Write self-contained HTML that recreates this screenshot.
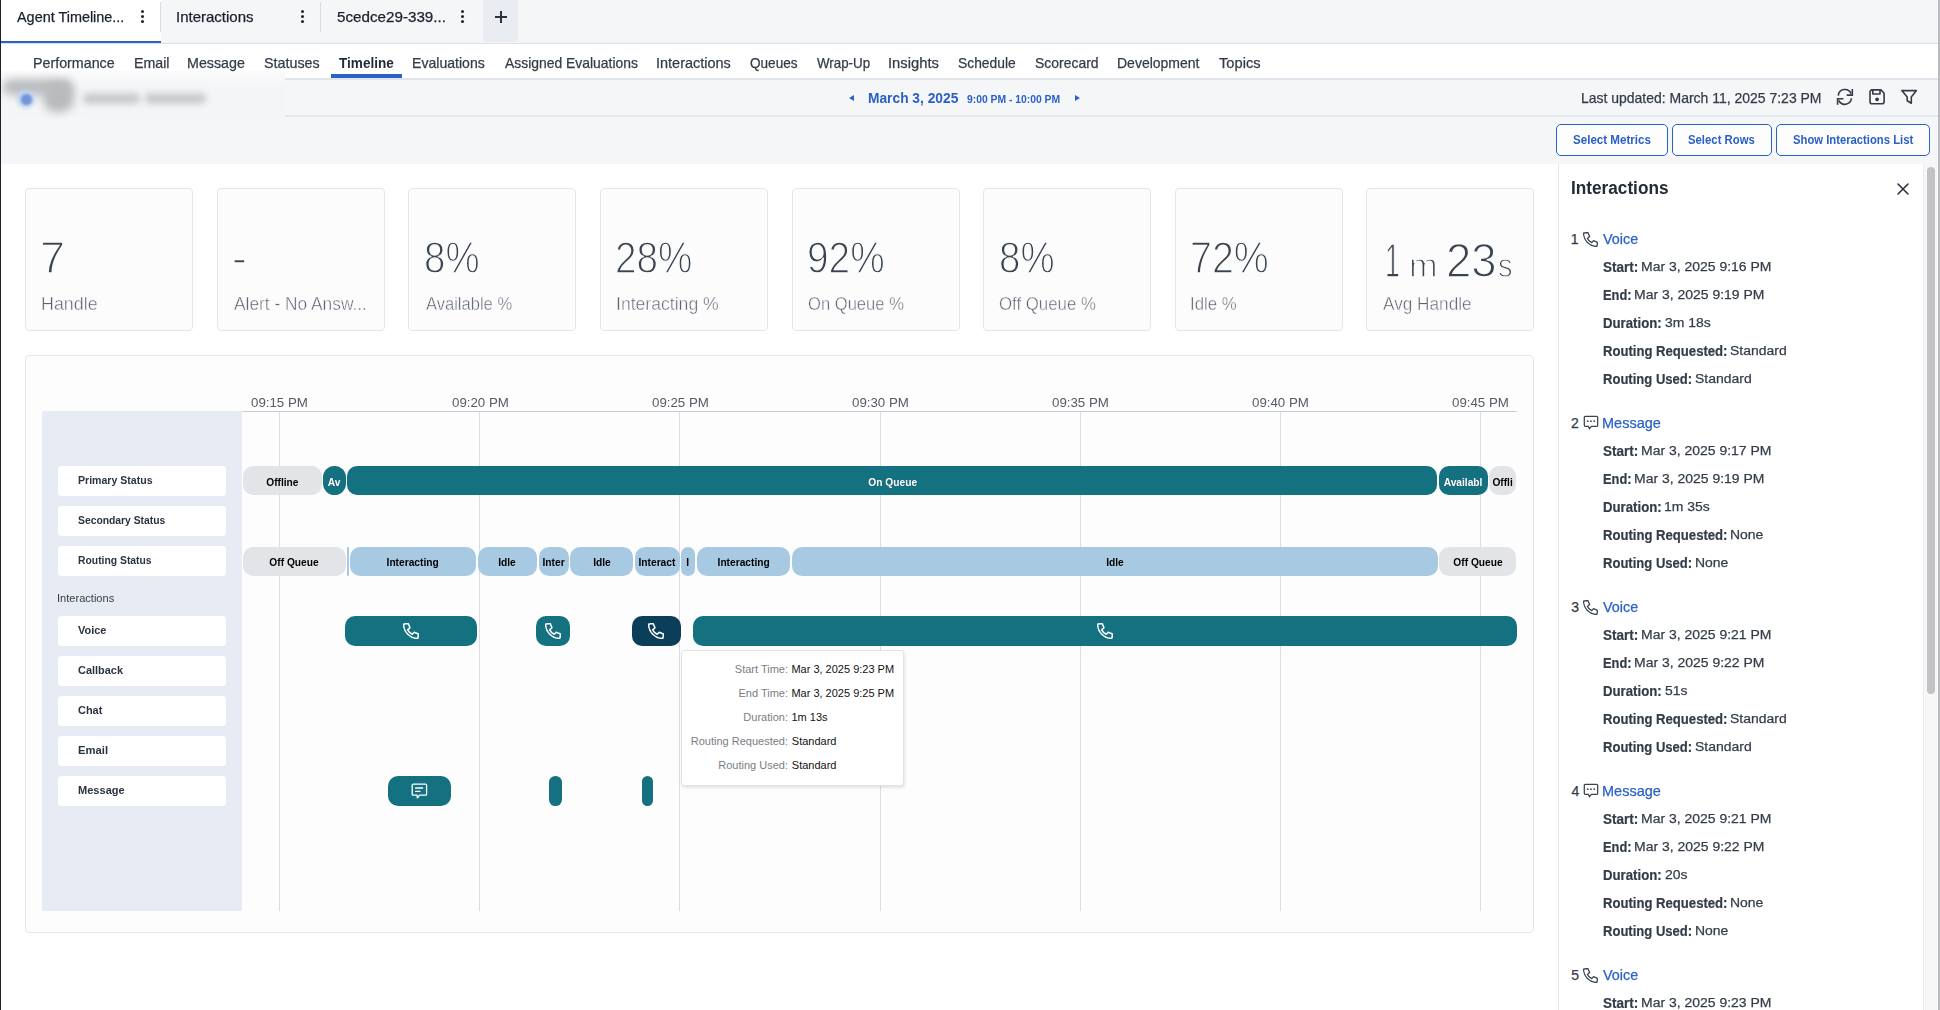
<!DOCTYPE html><html><head><meta charset='utf-8'><style>html,body{margin:0;padding:0;}
body{width:1940px;height:1010px;overflow:hidden;position:relative;background:#fff;font-family:"Liberation Sans",sans-serif;}
.a{position:absolute;box-sizing:border-box;}
.t{font-family:"Liberation Sans",sans-serif;}
.card{position:absolute;top:188px;width:168px;height:143px;border:1px solid #e2e6ed;border-radius:4px;background:#fcfcfd;box-sizing:border-box;}
.lbl{position:absolute;left:58px;width:168px;height:30px;background:#fff;border-radius:4px;}
.pill{position:absolute;height:29px;border-radius:10px;box-sizing:border-box;}
.g{background:#e3e4e8;}
.tl{background:#137180;}
.lb{background:#a8c9e2;}
.vl{position:absolute;top:412px;height:499px;width:1px;background:#dcdde2;}
.pt{position:absolute;font-weight:700;font-size:11px;line-height:11px;color:#000;white-space:nowrap;text-align:center;}
.btn{position:absolute;top:124px;height:32px;border:1.5px solid #2c62c7;border-radius:5px;background:#fdfdfe;box-sizing:border-box;}
</style></head><body><!-- left dark edge -->
<div class="a" style="left:0;top:0;width:1.3px;height:1010px;background:#1c232e;z-index:50"></div>
<!-- tab bar -->
<div class="a" style="left:0;top:0;width:1940px;height:44px;background:#f5f6f8;border-bottom:1px solid #dde0e5"></div>
<div class="a" style="left:1px;top:0;width:160px;height:43px;background:#fff"></div>
<div class="a" style="left:1px;top:41px;width:160px;height:2px;background:#2a62c9"></div>
<div class="a" style="left:160px;top:2px;width:1px;height:30px;background:#d9dce1"></div>
<div class="a" style="left:320px;top:2px;width:1px;height:30px;background:#d9dce1"></div>
<div class="a" style="left:483px;top:0;width:35px;height:42px;background:#e9ecf1;border-radius:0 0 4px 4px"></div>
<!-- plus -->
<div class="a" style="left:495.2px;top:16.4px;width:11.8px;height:1.3px;background:#2b3340"></div>
<div class="a" style="left:500.45px;top:11.1px;width:1.3px;height:11.8px;background:#2b3340"></div>
<!-- dots -->
<div class="a" style="left:140.7px;top:10px;width:3px;height:3px;border-radius:50%;background:#1f2733;box-shadow:0 5px 0 #1f2733,0 10px 0 #1f2733"></div>
<div class="a" style="left:300.6px;top:10px;width:3px;height:3px;border-radius:50%;background:#1f2733;box-shadow:0 5px 0 #1f2733,0 10px 0 #1f2733"></div>
<div class="a" style="left:460.5px;top:10px;width:3px;height:3px;border-radius:50%;background:#1f2733;box-shadow:0 5px 0 #1f2733,0 10px 0 #1f2733"></div>
<!-- subnav -->
<div class="a" style="left:0;top:44px;width:1940px;height:36px;background:#fff"></div>
<div class="a" style="left:0;top:79px;width:1940px;height:85px;background:#f5f6f8"></div>
<div class="a" style="left:0;top:78px;width:1940px;height:1.5px;background:#e0e5ec"></div>
<div class="a" style="left:331px;top:74px;width:71px;height:4px;background:#2c62c7"></div>
<div class="a" style="left:0;top:114.5px;width:1940px;height:2px;background:#e3e7ee"></div>
<!-- blurred avatar area -->
<div class="a" style="left:1px;top:71px;width:284px;height:46px;background:linear-gradient(#fbfbfc,#f4f5f7 40%)"></div>
<div class="a" style="left:3px;top:79px;width:70px;height:16px;border-radius:8px;background:#bbbcbf;filter:blur(4.5px)"></div>
<div class="a" style="left:43px;top:83px;width:31px;height:29px;border-radius:13px;background:#b9babd;filter:blur(4.5px)"></div>
<div class="a" style="left:83px;top:92.5px;width:57px;height:11px;border-radius:5px;background:#c9cacd;filter:blur(3px)"></div>
<div class="a" style="left:145px;top:92.5px;width:61px;height:11px;border-radius:5px;background:#c9cacd;filter:blur(3px)"></div>
<div class="a" style="left:17px;top:90px;width:18px;height:18px;border-radius:50%;background:#b9d3ee;filter:blur(2px)"></div>
<div class="a" style="left:20.5px;top:93.5px;width:11px;height:11px;border-radius:50%;background:#7494d9;filter:blur(0.8px)"></div>
<!-- date arrows -->
<div class="a" style="left:849px;top:95px;width:0;height:0;border-top:3.5px solid transparent;border-bottom:3.5px solid transparent;border-right:5px solid #2c62c7"></div>
<div class="a" style="left:1075px;top:95px;width:0;height:0;border-top:3.5px solid transparent;border-bottom:3.5px solid transparent;border-left:5px solid #2c62c7"></div>
<!-- header icons -->
<svg class="a" style="left:1836px;top:88px" width="18" height="18" viewBox="0 0 18 18" fill="none" stroke="#343b46" stroke-width="1.6" stroke-linejoin="miter">
 <path d="M2.3 7.6 A6.6 6.6 0 0 1 15 5.6"/><path d="M16.3 1 V7.1 H10.7"/>
 <path d="M15.4 10.3 A6.6 6.6 0 0 1 2.8 12.4"/><path d="M1.6 16.7 V10.7 H7.4"/>
</svg>
<svg class="a" style="left:1867px;top:88px" width="19" height="18" viewBox="0 0 19 18" fill="none" stroke="#343b46" stroke-width="1.6" stroke-linejoin="round">
 <path d="M4.4 1.9 H14 L17.1 5.2 V13.8 A2 2 0 0 1 15.1 15.8 H5 A2 2 0 0 1 3 13.8 V3.9 A2 2 0 0 1 5 1.9 Z"/>
 <path d="M5.8 1.9 V6 H13 V1.9"/><circle cx="10.1" cy="11.3" r="1.9" fill="#343b46" stroke="none"/>
</svg>
<svg class="a" style="left:1900px;top:88px" width="18" height="18" viewBox="0 0 18 18" fill="none" stroke="#343b46" stroke-width="1.6" stroke-linejoin="round">
 <path d="M1.8 2.6 H16.4 L11.3 9 V15.2 L7.2 12.8 V9 Z"/>
</svg>
<!-- buttons -->
<div class="btn" style="left:1556px;width:112px"></div>
<div class="btn" style="left:1672px;width:100px"></div>
<div class="btn" style="left:1776px;width:154px"></div>
<!-- content -->
<div class="a" style="left:0;top:164px;width:1940px;height:846px;background:#fff"></div>
<!-- cards -->
<div class="card" style="left:25px"></div>
<div class="card" style="left:217px"></div>
<div class="card" style="left:408px"></div>
<div class="card" style="left:600px"></div>
<div class="card" style="left:792px"></div>
<div class="card" style="left:983px"></div>
<div class="card" style="left:1175px"></div>
<div class="card" style="left:1366px"></div>
<!-- timeline panel -->
<div class="a" style="left:25px;top:355px;width:509px;height:578px;border:1px solid #e3e7ee;border-radius:4px;background:#fdfdfe;width:1509px"></div>
<div class="a" style="left:42px;top:411px;width:200px;height:500px;background:#e7ebf3"></div>
<div class="a" style="left:242px;top:411px;width:1275px;height:1px;background:#c9cbd0"></div>
<div class="vl" style="left:279px"></div>
<div class="vl" style="left:479px"></div>
<div class="vl" style="left:679px"></div>
<div class="vl" style="left:880px"></div>
<div class="vl" style="left:1080px"></div>
<div class="vl" style="left:1280px"></div>
<div class="vl" style="left:1480px"></div>
<!-- label pills -->
<div class="lbl" style="top:466px"></div>
<div class="lbl" style="top:506px"></div>
<div class="lbl" style="top:546px"></div>
<div class="lbl" style="top:616px"></div>
<div class="lbl" style="top:656px"></div>
<div class="lbl" style="top:696px"></div>
<div class="lbl" style="top:736px"></div>
<div class="lbl" style="top:776px"></div>
<!-- right panel -->
<div class="a" style="left:1558px;top:164px;width:366px;height:846px;background:#fff;border-left:1px solid #e3e8f0"></div>
<div class="a" style="left:1923px;top:164px;width:15px;height:846px;background:#f7f7f8;border-left:1px solid #ececee"></div>
<div class="a" style="left:1927px;top:167px;width:8px;height:527px;background:#c2c2c5;border-radius:4px"></div>
<div class="a" style="left:1938px;top:0;width:2px;height:1010px;background:#b9bbbf"></div>
<!-- close X -->
<svg class="a" style="left:1896px;top:182px" width="14" height="14" viewBox="0 0 14 14" stroke="#2b3340" stroke-width="1.6" stroke-linecap="round"><path d="M2 2 L12 12 M12 2 L2 12"/></svg>
<div class="pill g" style="left:242.70px;top:466.30px;width:79.10px;height:29.10px;border-radius:10px;"><div style="position:absolute;left:0;right:0;top:0;bottom:0;display:flex;align-items:center;justify-content:center;overflow:hidden;"><span style="font-weight:700;font-size:11.60px;line-height:1;color:#000;white-space:nowrap;display:inline-block;transform:scaleX(0.880);padding-top:2.3px;">Offline</span></div></div>
<div class="pill tl" style="left:323.10px;top:466.30px;width:22.80px;height:29.10px;border-radius:11.4px;"><div style="position:absolute;left:0;right:0;top:0;bottom:0;display:flex;align-items:center;justify-content:center;overflow:hidden;"><span style="font-weight:700;font-size:11.60px;line-height:1;color:#fff;white-space:nowrap;display:inline-block;transform:scaleX(0.880);padding-top:2.3px;text-shadow:0 0 1px #2d4a66;">Av</span></div></div>
<div class="pill tl" style="left:347.30px;top:466.30px;width:1090.10px;height:29.10px;border-radius:10px;"><div style="position:absolute;left:0;right:0;top:0;bottom:0;display:flex;align-items:center;justify-content:center;overflow:hidden;"><span style="font-weight:700;font-size:11.60px;line-height:1;color:#fff;white-space:nowrap;display:inline-block;transform:scaleX(0.880);padding-top:2.3px;text-shadow:0 0 1px #2d4a66;">On Queue</span></div></div>
<div class="pill tl" style="left:1438.80px;top:466.30px;width:49.10px;height:29.10px;border-radius:10px;"><div style="position:absolute;left:0;right:0;top:0;bottom:0;display:flex;align-items:center;justify-content:center;overflow:hidden;"><span style="font-weight:700;font-size:11.60px;line-height:1;color:#fff;white-space:nowrap;display:inline-block;transform:scaleX(0.880);padding-top:2.3px;text-shadow:0 0 1px #2d4a66;">Availabl</span></div></div>
<div class="pill g" style="left:1488.90px;top:466.30px;width:27.30px;height:29.10px;border-radius:10px;"><div style="position:absolute;left:0;right:0;top:0;bottom:0;display:flex;align-items:center;justify-content:center;overflow:hidden;"><span style="font-weight:700;font-size:11.60px;line-height:1;color:#000;white-space:nowrap;display:inline-block;transform:scaleX(0.880);padding-top:2.3px;">Offli</span></div></div>
<div class="pill g" style="left:242.70px;top:546.50px;width:103.20px;height:29.00px;border-radius:10px;"><div style="position:absolute;left:0;right:0;top:0;bottom:0;display:flex;align-items:center;justify-content:center;overflow:hidden;"><span style="font-weight:700;font-size:11.60px;line-height:1;color:#000;white-space:nowrap;display:inline-block;transform:scaleX(0.880);padding-top:2.3px;">Off Queue</span></div></div>
<div class="pill lb" style="left:347.30px;top:546.50px;width:1.90px;height:29.00px;border-radius:1px;"></div>
<div class="pill lb" style="left:350.00px;top:546.50px;width:126.00px;height:29.00px;border-radius:10px;"><div style="position:absolute;left:0;right:0;top:0;bottom:0;display:flex;align-items:center;justify-content:center;overflow:hidden;"><span style="font-weight:700;font-size:11.60px;line-height:1;color:#000;white-space:nowrap;display:inline-block;transform:scaleX(0.880);padding-top:2.3px;">Interacting</span></div></div>
<div class="pill lb" style="left:477.70px;top:546.50px;width:59.50px;height:29.00px;border-radius:10px;"><div style="position:absolute;left:0;right:0;top:0;bottom:0;display:flex;align-items:center;justify-content:center;overflow:hidden;"><span style="font-weight:700;font-size:11.60px;line-height:1;color:#000;white-space:nowrap;display:inline-block;transform:scaleX(0.880);padding-top:2.3px;">Idle</span></div></div>
<div class="pill lb" style="left:538.90px;top:546.50px;width:29.80px;height:29.00px;border-radius:10px;"><div style="position:absolute;left:0;right:0;top:0;bottom:0;display:flex;align-items:center;justify-content:center;overflow:hidden;"><span style="font-weight:700;font-size:11.60px;line-height:1;color:#000;white-space:nowrap;display:inline-block;transform:scaleX(0.880);padding-top:2.3px;">Inter</span></div></div>
<div class="pill lb" style="left:570.40px;top:546.50px;width:62.60px;height:29.00px;border-radius:10px;"><div style="position:absolute;left:0;right:0;top:0;bottom:0;display:flex;align-items:center;justify-content:center;overflow:hidden;"><span style="font-weight:700;font-size:11.60px;line-height:1;color:#000;white-space:nowrap;display:inline-block;transform:scaleX(0.880);padding-top:2.3px;">Idle</span></div></div>
<div class="pill lb" style="left:634.70px;top:546.50px;width:44.90px;height:29.00px;border-radius:10px;"><div style="position:absolute;left:0;right:0;top:0;bottom:0;display:flex;align-items:center;justify-content:center;overflow:hidden;"><span style="font-weight:700;font-size:11.60px;line-height:1;color:#000;white-space:nowrap;display:inline-block;transform:scaleX(0.880);padding-top:2.3px;">Interact</span></div></div>
<div class="pill lb" style="left:681.30px;top:546.50px;width:13.60px;height:29.00px;border-radius:7px;"><div style="position:absolute;left:0;right:0;top:0;bottom:0;display:flex;align-items:center;justify-content:center;overflow:hidden;"><span style="font-weight:700;font-size:11.60px;line-height:1;color:#000;white-space:nowrap;display:inline-block;transform:scaleX(0.880);padding-top:2.3px;">I</span></div></div>
<div class="pill lb" style="left:696.60px;top:546.50px;width:93.50px;height:29.00px;border-radius:10px;"><div style="position:absolute;left:0;right:0;top:0;bottom:0;display:flex;align-items:center;justify-content:center;overflow:hidden;"><span style="font-weight:700;font-size:11.60px;line-height:1;color:#000;white-space:nowrap;display:inline-block;transform:scaleX(0.880);padding-top:2.3px;">Interacting</span></div></div>
<div class="pill lb" style="left:791.80px;top:546.50px;width:646.20px;height:29.00px;border-radius:10px;"><div style="position:absolute;left:0;right:0;top:0;bottom:0;display:flex;align-items:center;justify-content:center;overflow:hidden;"><span style="font-weight:700;font-size:11.60px;line-height:1;color:#000;white-space:nowrap;display:inline-block;transform:scaleX(0.880);padding-top:2.3px;">Idle</span></div></div>
<div class="pill g" style="left:1439.00px;top:546.50px;width:77.30px;height:29.00px;border-radius:10px;"><div style="position:absolute;left:0;right:0;top:0;bottom:0;display:flex;align-items:center;justify-content:center;overflow:hidden;"><span style="font-weight:700;font-size:11.60px;line-height:1;color:#000;white-space:nowrap;display:inline-block;transform:scaleX(0.880);padding-top:2.3px;">Off Queue</span></div></div>
<div class="pill" style="left:344.80px;top:616.00px;width:132.00px;height:29.80px;border-radius:10px;background:#137180"></div>
<svg class="a" style="left:402.80px;top:623.00px" width="16" height="16" viewBox="0 0 16 16" fill="none" stroke="#fff" stroke-width="1.5" stroke-linejoin="round"><path d="M5.2 0.6 L7 4.8 L4.7 6.9 C5.6 8.8 7.3 10.4 9.3 11.3 L11.2 9.2 L15.4 11 C15.4 12.5 15.1 14.2 14.7 15.4 C7 15.4 0.6 9 0.6 1.2 C1.8 0.8 3.6 0.6 5.2 0.6 Z"/></svg>
<div class="pill" style="left:535.80px;top:616.00px;width:33.80px;height:29.80px;border-radius:10px;background:#137180"></div>
<svg class="a" style="left:544.70px;top:623.00px" width="16" height="16" viewBox="0 0 16 16" fill="none" stroke="#fff" stroke-width="1.5" stroke-linejoin="round"><path d="M5.2 0.6 L7 4.8 L4.7 6.9 C5.6 8.8 7.3 10.4 9.3 11.3 L11.2 9.2 L15.4 11 C15.4 12.5 15.1 14.2 14.7 15.4 C7 15.4 0.6 9 0.6 1.2 C1.8 0.8 3.6 0.6 5.2 0.6 Z"/></svg>
<div class="pill" style="left:632.00px;top:616.00px;width:48.50px;height:29.80px;border-radius:10px;background:#0b3e58"></div>
<svg class="a" style="left:648.25px;top:623.00px" width="16" height="16" viewBox="0 0 16 16" fill="none" stroke="#fff" stroke-width="1.5" stroke-linejoin="round"><path d="M5.2 0.6 L7 4.8 L4.7 6.9 C5.6 8.8 7.3 10.4 9.3 11.3 L11.2 9.2 L15.4 11 C15.4 12.5 15.1 14.2 14.7 15.4 C7 15.4 0.6 9 0.6 1.2 C1.8 0.8 3.6 0.6 5.2 0.6 Z"/></svg>
<div class="pill" style="left:693.30px;top:616.00px;width:823.70px;height:29.80px;border-radius:10px;background:#137180"></div>
<svg class="a" style="left:1097.15px;top:623.00px" width="16" height="16" viewBox="0 0 16 16" fill="none" stroke="#fff" stroke-width="1.5" stroke-linejoin="round"><path d="M5.2 0.6 L7 4.8 L4.7 6.9 C5.6 8.8 7.3 10.4 9.3 11.3 L11.2 9.2 L15.4 11 C15.4 12.5 15.1 14.2 14.7 15.4 C7 15.4 0.6 9 0.6 1.2 C1.8 0.8 3.6 0.6 5.2 0.6 Z"/></svg>
<div class="pill tl" style="left:388px;top:776.10px;width:62.8px;height:29.60px;border-radius:10px"></div>
<div class="pill tl" style="left:548.9px;top:776.10px;width:12.8px;height:29.60px;border-radius:6.4px"></div>
<div class="pill tl" style="left:641.6px;top:776.10px;width:11.3px;height:29.60px;border-radius:5.6px"></div>
<svg class="a" style="left:411px;top:782.5px" width="17" height="17" viewBox="0 0 17 17" fill="none" stroke="#fff" stroke-width="1.3" stroke-linejoin="round" stroke-linecap="round"><path d="M2.2 1.2 H14.6 A1 1 0 0 1 15.6 2.2 V11.2 A1 1 0 0 1 14.6 12.2 H8.6 L6.4 14.9 L6 12.2 H2.2 A1 1 0 0 1 1.2 11.2 V2.2 A1 1 0 0 1 2.2 1.2 Z"/><path d="M4.6 5 H11.6 M4.6 8.3 H9"/></svg>
<div class="a" style="left:680.8px;top:649.5px;width:223.4px;height:136.5px;background:#fff;border:1px solid #e2e3e6;border-radius:3px;box-shadow:1px 2px 3px rgba(0,0,0,0.10)"></div>
<svg class="a" style="left:1583.40px;top:231.50px" width="15" height="15" viewBox="0 0 16 16" fill="none" stroke="#3b4350" stroke-width="1.3866666666666667" stroke-linejoin="round"><path d="M5.2 0.6 L7 4.8 L4.7 6.9 C5.6 8.8 7.3 10.4 9.3 11.3 L11.2 9.2 L15.4 11 C15.4 12.5 15.1 14.2 14.7 15.4 C7 15.4 0.6 9 0.6 1.2 C1.8 0.8 3.6 0.6 5.2 0.6 Z"/></svg>
<svg class="a" style="left:1583px;top:414.70px" width="16" height="16" viewBox="0 0 16 16" fill="none" stroke="#3b4350" stroke-width="1.25" stroke-linejoin="round"><path d="M2.3 1.3 H13.7 A1 1 0 0 1 14.7 2.3 V10.3 A1 1 0 0 1 13.7 11.3 H8.4 L6.3 13.8 L5.6 11.3 H2.3 A1 1 0 0 1 1.3 10.3 V2.3 A1 1 0 0 1 2.3 1.3 Z"/><circle cx="4.8" cy="6.2" r="0.85" fill="#3b4350" stroke="none"/><circle cx="8" cy="6.2" r="0.85" fill="#3b4350" stroke="none"/><circle cx="11.2" cy="6.2" r="0.85" fill="#3b4350" stroke="none"/></svg>
<svg class="a" style="left:1583.40px;top:599.50px" width="15" height="15" viewBox="0 0 16 16" fill="none" stroke="#3b4350" stroke-width="1.3866666666666667" stroke-linejoin="round"><path d="M5.2 0.6 L7 4.8 L4.7 6.9 C5.6 8.8 7.3 10.4 9.3 11.3 L11.2 9.2 L15.4 11 C15.4 12.5 15.1 14.2 14.7 15.4 C7 15.4 0.6 9 0.6 1.2 C1.8 0.8 3.6 0.6 5.2 0.6 Z"/></svg>
<svg class="a" style="left:1583px;top:782.70px" width="16" height="16" viewBox="0 0 16 16" fill="none" stroke="#3b4350" stroke-width="1.25" stroke-linejoin="round"><path d="M2.3 1.3 H13.7 A1 1 0 0 1 14.7 2.3 V10.3 A1 1 0 0 1 13.7 11.3 H8.4 L6.3 13.8 L5.6 11.3 H2.3 A1 1 0 0 1 1.3 10.3 V2.3 A1 1 0 0 1 2.3 1.3 Z"/><circle cx="4.8" cy="6.2" r="0.85" fill="#3b4350" stroke="none"/><circle cx="8" cy="6.2" r="0.85" fill="#3b4350" stroke="none"/><circle cx="11.2" cy="6.2" r="0.85" fill="#3b4350" stroke="none"/></svg>
<svg class="a" style="left:1583.40px;top:967.50px" width="15" height="15" viewBox="0 0 16 16" fill="none" stroke="#3b4350" stroke-width="1.3866666666666667" stroke-linejoin="round"><path d="M5.2 0.6 L7 4.8 L4.7 6.9 C5.6 8.8 7.3 10.4 9.3 11.3 L11.2 9.2 L15.4 11 C15.4 12.5 15.1 14.2 14.7 15.4 C7 15.4 0.6 9 0.6 1.2 C1.8 0.8 3.6 0.6 5.2 0.6 Z"/></svg>
<div class="t" id="t0" style="position:absolute;top:10.23px;font-size:14.50px;line-height:14.50px;font-weight:400;color:#1a212c;white-space:nowrap;-webkit-text-stroke:0.25px currentColor;left:17.27px;transform:scaleX(0.9939);transform-origin:left;">Agent Timeline...</div>
<div class="t" id="t1" style="position:absolute;top:10.23px;font-size:14.50px;line-height:14.50px;font-weight:400;color:#1a212c;white-space:nowrap;-webkit-text-stroke:0.25px currentColor;left:175.92px;transform:scaleX(1.0341);transform-origin:left;">Interactions</div>
<div class="t" id="t2" style="position:absolute;top:10.23px;font-size:14.50px;line-height:14.50px;font-weight:400;color:#1a212c;white-space:nowrap;-webkit-text-stroke:0.25px currentColor;left:336.99px;transform:scaleX(1.0480);transform-origin:left;">5cedce29-339...</div>
<div class="t" id="t3" style="position:absolute;top:56.23px;font-size:14.50px;line-height:14.50px;font-weight:400;color:#343c48;white-space:nowrap;-webkit-text-stroke:0.25px currentColor;left:33.43px;transform:scaleX(0.9842);transform-origin:left;">Performance</div>
<div class="t" id="t4" style="position:absolute;top:56.23px;font-size:14.50px;line-height:14.50px;font-weight:400;color:#343c48;white-space:nowrap;-webkit-text-stroke:0.25px currentColor;left:133.54px;transform:scaleX(0.9793);transform-origin:left;">Email</div>
<div class="t" id="t5" style="position:absolute;top:56.23px;font-size:14.50px;line-height:14.50px;font-weight:400;color:#343c48;white-space:nowrap;-webkit-text-stroke:0.25px currentColor;left:187.23px;transform:scaleX(0.9840);transform-origin:left;">Message</div>
<div class="t" id="t6" style="position:absolute;top:56.23px;font-size:14.50px;line-height:14.50px;font-weight:400;color:#343c48;white-space:nowrap;-webkit-text-stroke:0.25px currentColor;left:264.05px;transform:scaleX(0.9866);transform-origin:left;">Statuses</div>
<div class="t" id="t7" style="position:absolute;top:56.23px;font-size:14.50px;line-height:14.50px;font-weight:700;color:#232b37;white-space:nowrap;left:339.45px;transform:scaleX(0.9360);transform-origin:left;">Timeline</div>
<div class="t" id="t8" style="position:absolute;top:56.23px;font-size:14.50px;line-height:14.50px;font-weight:400;color:#343c48;white-space:nowrap;-webkit-text-stroke:0.25px currentColor;left:412.25px;transform:scaleX(0.9706);transform-origin:left;">Evaluations</div>
<div class="t" id="t9" style="position:absolute;top:56.23px;font-size:14.50px;line-height:14.50px;font-weight:400;color:#343c48;white-space:nowrap;-webkit-text-stroke:0.25px currentColor;left:504.67px;transform:scaleX(0.9587);transform-origin:left;">Assigned Evaluations</div>
<div class="t" id="t10" style="position:absolute;top:56.23px;font-size:14.50px;line-height:14.50px;font-weight:400;color:#343c48;white-space:nowrap;-webkit-text-stroke:0.25px currentColor;left:655.96px;transform:scaleX(0.9985);transform-origin:left;">Interactions</div>
<div class="t" id="t11" style="position:absolute;top:56.23px;font-size:14.50px;line-height:14.50px;font-weight:400;color:#343c48;white-space:nowrap;-webkit-text-stroke:0.25px currentColor;left:749.86px;transform:scaleX(0.9357);transform-origin:left;">Queues</div>
<div class="t" id="t12" style="position:absolute;top:56.23px;font-size:14.50px;line-height:14.50px;font-weight:400;color:#343c48;white-space:nowrap;-webkit-text-stroke:0.25px currentColor;left:816.94px;transform:scaleX(0.9198);transform-origin:left;">Wrap-Up</div>
<div class="t" id="t13" style="position:absolute;top:56.23px;font-size:14.50px;line-height:14.50px;font-weight:400;color:#343c48;white-space:nowrap;-webkit-text-stroke:0.25px currentColor;left:888.24px;transform:scaleX(1.0182);transform-origin:left;">Insights</div>
<div class="t" id="t14" style="position:absolute;top:56.23px;font-size:14.50px;line-height:14.50px;font-weight:400;color:#343c48;white-space:nowrap;-webkit-text-stroke:0.25px currentColor;left:958.07px;transform:scaleX(0.9532);transform-origin:left;">Schedule</div>
<div class="t" id="t15" style="position:absolute;top:56.23px;font-size:14.50px;line-height:14.50px;font-weight:400;color:#343c48;white-space:nowrap;-webkit-text-stroke:0.25px currentColor;left:1034.87px;transform:scaleX(0.9612);transform-origin:left;">Scorecard</div>
<div class="t" id="t16" style="position:absolute;top:56.23px;font-size:14.50px;line-height:14.50px;font-weight:400;color:#343c48;white-space:nowrap;-webkit-text-stroke:0.25px currentColor;left:1116.65px;transform:scaleX(0.9650);transform-origin:left;">Development</div>
<div class="t" id="t17" style="position:absolute;top:56.23px;font-size:14.50px;line-height:14.50px;font-weight:400;color:#343c48;white-space:nowrap;-webkit-text-stroke:0.25px currentColor;left:1218.77px;transform:scaleX(1.0109);transform-origin:left;">Topics</div>
<div class="t" id="t18" style="position:absolute;top:91.23px;font-size:14.50px;line-height:14.50px;font-weight:700;color:#2a5fc6;white-space:nowrap;left:868.08px;transform:scaleX(0.9493);transform-origin:left;">March 3, 2025</div>
<div class="t" id="t19" style="position:absolute;top:93.93px;font-size:11.30px;line-height:11.30px;font-weight:700;color:#2a5fc6;white-space:nowrap;left:966.64px;transform:scaleX(0.9148);transform-origin:left;">9:00 PM - 10:00 PM</div>
<div class="t" id="t20" style="position:absolute;top:90.53px;font-size:14.50px;line-height:14.50px;font-weight:400;color:#343c48;white-space:nowrap;-webkit-text-stroke:0.25px currentColor;left:1580.65px;transform:scaleX(0.9634);transform-origin:left;">Last updated: March 11, 2025 7:23 PM</div>
<div class="t" id="t21" style="position:absolute;top:134.09px;font-size:12.30px;line-height:12.30px;font-weight:700;color:#2a5fc6;white-space:nowrap;left:1572.67px;transform:scaleX(0.9419);transform-origin:left;">Select Metrics</div>
<div class="t" id="t22" style="position:absolute;top:134.09px;font-size:12.30px;line-height:12.30px;font-weight:700;color:#2a5fc6;white-space:nowrap;left:1688.27px;transform:scaleX(0.9219);transform-origin:left;">Select Rows</div>
<div class="t" id="t23" style="position:absolute;top:134.09px;font-size:12.30px;line-height:12.30px;font-weight:700;color:#2a5fc6;white-space:nowrap;left:1792.88px;transform:scaleX(0.9160);transform-origin:left;">Show Interactions List</div>
<div class="t" id="t24" style="position:absolute;top:235.93px;font-size:44.50px;line-height:44.50px;font-weight:400;color:#3a4350;white-space:nowrap;-webkit-text-stroke:1.3px #fcfcfd;left:40.19px;transform:scaleX(1.0133);transform-origin:left;">7</div>
<div class="t" id="t25" style="position:absolute;top:295.06px;font-size:18.60px;line-height:18.60px;font-weight:400;color:#5c6470;white-space:nowrap;-webkit-text-stroke:0.45px #fcfcfd;left:41.03px;transform:scaleX(0.9614);transform-origin:left;">Handle</div>
<div class="t" id="t26" style="position:absolute;top:235.93px;font-size:44.50px;line-height:44.50px;font-weight:400;color:#3a4350;white-space:nowrap;-webkit-text-stroke:1.3px #fcfcfd;left:232.07px;transform:scaleX(1.0024);transform-origin:left;">-</div>
<div class="t" id="t27" style="position:absolute;top:295.06px;font-size:18.60px;line-height:18.60px;font-weight:400;color:#5c6470;white-space:nowrap;-webkit-text-stroke:0.45px #fcfcfd;left:234.02px;transform:scaleX(0.9320);transform-origin:left;">Alert - No Answ...</div>
<div class="t" id="t28" style="position:absolute;top:235.93px;font-size:44.50px;line-height:44.50px;font-weight:400;color:#3a4350;white-space:nowrap;-webkit-text-stroke:1.3px #fcfcfd;left:423.93px;transform:scaleX(0.8650);transform-origin:left;">8%</div>
<div class="t" id="t29" style="position:absolute;top:295.06px;font-size:18.60px;line-height:18.60px;font-weight:400;color:#5c6470;white-space:nowrap;-webkit-text-stroke:0.45px #fcfcfd;left:425.57px;transform:scaleX(0.8894);transform-origin:left;">Available %</div>
<div class="t" id="t30" style="position:absolute;top:235.93px;font-size:44.50px;line-height:44.50px;font-weight:400;color:#3a4350;white-space:nowrap;-webkit-text-stroke:1.3px #fcfcfd;left:615.20px;transform:scaleX(0.8703);transform-origin:left;">28%</div>
<div class="t" id="t31" style="position:absolute;top:295.06px;font-size:18.60px;line-height:18.60px;font-weight:400;color:#5c6470;white-space:nowrap;-webkit-text-stroke:0.45px #fcfcfd;left:615.52px;transform:scaleX(0.9468);transform-origin:left;">Interacting %</div>
<div class="t" id="t32" style="position:absolute;top:235.93px;font-size:44.50px;line-height:44.50px;font-weight:400;color:#3a4350;white-space:nowrap;-webkit-text-stroke:1.3px #fcfcfd;left:806.88px;transform:scaleX(0.8735);transform-origin:left;">92%</div>
<div class="t" id="t33" style="position:absolute;top:295.06px;font-size:18.60px;line-height:18.60px;font-weight:400;color:#5c6470;white-space:nowrap;-webkit-text-stroke:0.45px #fcfcfd;left:807.91px;transform:scaleX(0.8919);transform-origin:left;">On Queue %</div>
<div class="t" id="t34" style="position:absolute;top:235.93px;font-size:44.50px;line-height:44.50px;font-weight:400;color:#3a4350;white-space:nowrap;-webkit-text-stroke:1.3px #fcfcfd;left:998.58px;transform:scaleX(0.8650);transform-origin:left;">8%</div>
<div class="t" id="t35" style="position:absolute;top:295.06px;font-size:18.60px;line-height:18.60px;font-weight:400;color:#5c6470;white-space:nowrap;-webkit-text-stroke:0.45px #fcfcfd;left:999.45px;transform:scaleX(0.9043);transform-origin:left;">Off Queue %</div>
<div class="t" id="t36" style="position:absolute;top:235.93px;font-size:44.50px;line-height:44.50px;font-weight:400;color:#3a4350;white-space:nowrap;-webkit-text-stroke:1.3px #fcfcfd;left:1189.78px;transform:scaleX(0.8860);transform-origin:left;">72%</div>
<div class="t" id="t37" style="position:absolute;top:295.06px;font-size:18.60px;line-height:18.60px;font-weight:400;color:#5c6470;white-space:nowrap;-webkit-text-stroke:0.45px #fcfcfd;left:1190.25px;transform:scaleX(0.9025);transform-origin:left;">Idle %</div>
<div class="t" id="t38" style="position:absolute;top:295.06px;font-size:18.60px;line-height:18.60px;font-weight:400;color:#5c6470;white-space:nowrap;-webkit-text-stroke:0.45px #fcfcfd;left:1383.32px;transform:scaleX(0.9249);transform-origin:left;">Avg Handle</div>
<div class="t" id="t39" style="position:absolute;top:236.67px;font-size:48.00px;line-height:48.00px;font-weight:400;color:#3a4350;white-space:nowrap;-webkit-text-stroke:1.3px #fcfcfd;left:1384.75px;transform:scaleX(0.5603);transform-origin:left;">1</div>
<div class="t" id="t40" style="position:absolute;top:249.37px;font-size:33.00px;line-height:33.00px;font-weight:400;color:#3a4350;white-space:nowrap;-webkit-text-stroke:1.3px #fcfcfd;left:1408.52px;transform:scaleX(1.0418);transform-origin:left;">m</div>
<div class="t" id="t41" style="position:absolute;top:236.67px;font-size:48.00px;line-height:48.00px;font-weight:400;color:#3a4350;white-space:nowrap;-webkit-text-stroke:1.3px #fcfcfd;left:1446.01px;transform:scaleX(0.9495);transform-origin:left;">23</div>
<div class="t" id="t42" style="position:absolute;top:249.37px;font-size:33.00px;line-height:33.00px;font-weight:400;color:#3a4350;white-space:nowrap;-webkit-text-stroke:1.3px #fcfcfd;left:1498.19px;transform:scaleX(0.8826);transform-origin:left;">s</div>
<div class="t" id="t43" style="position:absolute;top:395.50px;font-size:13.00px;line-height:13.00px;font-weight:400;color:#555b63;white-space:nowrap;left:251.38px;transform:scaleX(1.0225);transform-origin:left;">09:15 PM</div>
<div class="t" id="t44" style="position:absolute;top:395.50px;font-size:13.00px;line-height:13.00px;font-weight:400;color:#555b63;white-space:nowrap;left:451.53px;transform:scaleX(1.0225);transform-origin:left;">09:20 PM</div>
<div class="t" id="t45" style="position:absolute;top:395.50px;font-size:13.00px;line-height:13.00px;font-weight:400;color:#555b63;white-space:nowrap;left:651.68px;transform:scaleX(1.0225);transform-origin:left;">09:25 PM</div>
<div class="t" id="t46" style="position:absolute;top:395.50px;font-size:13.00px;line-height:13.00px;font-weight:400;color:#555b63;white-space:nowrap;left:851.83px;transform:scaleX(1.0225);transform-origin:left;">09:30 PM</div>
<div class="t" id="t47" style="position:absolute;top:395.50px;font-size:13.00px;line-height:13.00px;font-weight:400;color:#555b63;white-space:nowrap;left:1051.98px;transform:scaleX(1.0225);transform-origin:left;">09:35 PM</div>
<div class="t" id="t48" style="position:absolute;top:395.50px;font-size:13.00px;line-height:13.00px;font-weight:400;color:#555b63;white-space:nowrap;left:1252.13px;transform:scaleX(1.0225);transform-origin:left;">09:40 PM</div>
<div class="t" id="t49" style="position:absolute;top:395.50px;font-size:13.00px;line-height:13.00px;font-weight:400;color:#555b63;white-space:nowrap;left:1452.28px;transform:scaleX(1.0225);transform-origin:left;">09:45 PM</div>
<div class="t" id="t50" style="position:absolute;top:474.73px;font-size:11.30px;line-height:11.30px;font-weight:700;color:#2b3340;white-space:nowrap;left:77.59px;transform:scaleX(0.9347);transform-origin:left;">Primary Status</div>
<div class="t" id="t51" style="position:absolute;top:514.73px;font-size:11.30px;line-height:11.30px;font-weight:700;color:#2b3340;white-space:nowrap;left:78.00px;transform:scaleX(0.9150);transform-origin:left;">Secondary Status</div>
<div class="t" id="t52" style="position:absolute;top:554.73px;font-size:11.30px;line-height:11.30px;font-weight:700;color:#2b3340;white-space:nowrap;left:77.61px;transform:scaleX(0.9165);transform-origin:left;">Routing Status</div>
<div class="t" id="t53" style="position:absolute;top:624.73px;font-size:11.30px;line-height:11.30px;font-weight:700;color:#2b3340;white-space:nowrap;left:78.23px;transform:scaleX(0.9706);transform-origin:left;">Voice</div>
<div class="t" id="t54" style="position:absolute;top:664.73px;font-size:11.30px;line-height:11.30px;font-weight:700;color:#2b3340;white-space:nowrap;left:77.85px;transform:scaleX(0.9692);transform-origin:left;">Callback</div>
<div class="t" id="t55" style="position:absolute;top:704.73px;font-size:11.30px;line-height:11.30px;font-weight:700;color:#2b3340;white-space:nowrap;left:77.85px;transform:scaleX(0.9670);transform-origin:left;">Chat</div>
<div class="t" id="t56" style="position:absolute;top:744.73px;font-size:11.30px;line-height:11.30px;font-weight:700;color:#2b3340;white-space:nowrap;left:77.55px;transform:scaleX(0.9970);transform-origin:left;">Email</div>
<div class="t" id="t57" style="position:absolute;top:784.73px;font-size:11.30px;line-height:11.30px;font-weight:700;color:#2b3340;white-space:nowrap;left:77.56px;transform:scaleX(0.9787);transform-origin:left;">Message</div>
<div class="t" id="t58" style="position:absolute;top:593.09px;font-size:11.00px;line-height:11.00px;font-weight:400;color:#343c48;white-space:nowrap;left:57.48px;transform:scaleX(1.0061);transform-origin:left;">Interactions</div>
<div class="t" id="t59" style="position:absolute;top:664.19px;font-size:11.00px;line-height:11.00px;font-weight:400;color:#7a7d82;white-space:nowrap;right:1152.00px;">Start Time:</div>
<div class="t" id="t60" style="position:absolute;top:664.19px;font-size:11.00px;line-height:11.00px;font-weight:400;color:#111111;white-space:nowrap;left:791.40px;">Mar 3, 2025 9:23 PM</div>
<div class="t" id="t61" style="position:absolute;top:688.19px;font-size:11.00px;line-height:11.00px;font-weight:400;color:#7a7d82;white-space:nowrap;right:1152.00px;">End Time:</div>
<div class="t" id="t62" style="position:absolute;top:688.19px;font-size:11.00px;line-height:11.00px;font-weight:400;color:#111111;white-space:nowrap;left:791.40px;">Mar 3, 2025 9:25 PM</div>
<div class="t" id="t63" style="position:absolute;top:712.19px;font-size:11.00px;line-height:11.00px;font-weight:400;color:#7a7d82;white-space:nowrap;right:1152.00px;">Duration:</div>
<div class="t" id="t64" style="position:absolute;top:712.19px;font-size:11.00px;line-height:11.00px;font-weight:400;color:#111111;white-space:nowrap;left:791.46px;">1m 13s</div>
<div class="t" id="t65" style="position:absolute;top:736.19px;font-size:11.00px;line-height:11.00px;font-weight:400;color:#7a7d82;white-space:nowrap;right:1152.00px;">Routing Requested:</div>
<div class="t" id="t66" style="position:absolute;top:736.19px;font-size:11.00px;line-height:11.00px;font-weight:400;color:#111111;white-space:nowrap;left:791.80px;">Standard</div>
<div class="t" id="t67" style="position:absolute;top:760.19px;font-size:11.00px;line-height:11.00px;font-weight:400;color:#7a7d82;white-space:nowrap;right:1152.00px;">Routing Used:</div>
<div class="t" id="t68" style="position:absolute;top:760.19px;font-size:11.00px;line-height:11.00px;font-weight:400;color:#111111;white-space:nowrap;left:791.80px;">Standard</div>
<div class="t" id="t69" style="position:absolute;top:180.39px;font-size:17.50px;line-height:17.50px;font-weight:700;color:#232b37;white-space:nowrap;left:1570.55px;transform:scaleX(0.9824);transform-origin:left;">Interactions</div>
<div class="t" id="t70" style="position:absolute;top:232.15px;font-size:14.00px;line-height:14.00px;font-weight:400;color:#343c48;white-space:nowrap;-webkit-text-stroke:0.25px currentColor;left:1570.63px;">1</div>
<div class="t" id="t71" style="position:absolute;top:231.90px;font-size:14.30px;line-height:14.30px;font-weight:400;color:#2a62c6;white-space:nowrap;-webkit-text-stroke:0.25px currentColor;left:1603.34px;transform:scaleX(1.0062);transform-origin:left;">Voice</div>
<div class="t" id="t72" style="position:absolute;top:260.15px;font-size:14.00px;line-height:14.00px;font-weight:700;color:#343c48;white-space:nowrap;-webkit-text-stroke:0.2px currentColor;left:1603.01px;transform:scaleX(0.9652);transform-origin:left;">Start:</div>
<div class="t" id="t73" style="position:absolute;top:260.40px;font-size:13.70px;line-height:13.70px;font-weight:400;color:#343c48;white-space:nowrap;-webkit-text-stroke:0.25px currentColor;left:1641.15px;transform:scaleX(1.0200);transform-origin:left;">Mar 3, 2025 9:16 PM</div>
<div class="t" id="t74" style="position:absolute;top:288.15px;font-size:14.00px;line-height:14.00px;font-weight:700;color:#343c48;white-space:nowrap;-webkit-text-stroke:0.2px currentColor;left:1602.54px;transform:scaleX(0.9158);transform-origin:left;">End:</div>
<div class="t" id="t75" style="position:absolute;top:288.40px;font-size:13.70px;line-height:13.70px;font-weight:400;color:#343c48;white-space:nowrap;-webkit-text-stroke:0.25px currentColor;left:1633.95px;transform:scaleX(1.0200);transform-origin:left;">Mar 3, 2025 9:19 PM</div>
<div class="t" id="t76" style="position:absolute;top:316.15px;font-size:14.00px;line-height:14.00px;font-weight:700;color:#343c48;white-space:nowrap;-webkit-text-stroke:0.2px currentColor;left:1602.52px;transform:scaleX(0.9443);transform-origin:left;">Duration:</div>
<div class="t" id="t77" style="position:absolute;top:316.40px;font-size:13.70px;line-height:13.70px;font-weight:400;color:#343c48;white-space:nowrap;-webkit-text-stroke:0.25px currentColor;left:1664.77px;transform:scaleX(1.0200);transform-origin:left;">3m 18s</div>
<div class="t" id="t78" style="position:absolute;top:344.15px;font-size:14.00px;line-height:14.00px;font-weight:700;color:#343c48;white-space:nowrap;-webkit-text-stroke:0.2px currentColor;left:1602.52px;transform:scaleX(0.9356);transform-origin:left;">Routing Requested:</div>
<div class="t" id="t79" style="position:absolute;top:344.40px;font-size:13.70px;line-height:13.70px;font-weight:400;color:#343c48;white-space:nowrap;-webkit-text-stroke:0.25px currentColor;left:1730.37px;transform:scaleX(1.0200);transform-origin:left;">Standard</div>
<div class="t" id="t80" style="position:absolute;top:372.15px;font-size:14.00px;line-height:14.00px;font-weight:700;color:#343c48;white-space:nowrap;-webkit-text-stroke:0.2px currentColor;left:1602.53px;transform:scaleX(0.9317);transform-origin:left;">Routing Used:</div>
<div class="t" id="t81" style="position:absolute;top:372.40px;font-size:13.70px;line-height:13.70px;font-weight:400;color:#343c48;white-space:nowrap;-webkit-text-stroke:0.25px currentColor;left:1695.07px;transform:scaleX(1.0200);transform-origin:left;">Standard</div>
<div class="t" id="t82" style="position:absolute;top:416.15px;font-size:14.00px;line-height:14.00px;font-weight:400;color:#343c48;white-space:nowrap;-webkit-text-stroke:0.25px currentColor;left:1571.00px;">2</div>
<div class="t" id="t83" style="position:absolute;top:415.90px;font-size:14.30px;line-height:14.30px;font-weight:400;color:#2a62c6;white-space:nowrap;-webkit-text-stroke:0.25px currentColor;left:1602.21px;transform:scaleX(1.0141);transform-origin:left;">Message</div>
<div class="t" id="t84" style="position:absolute;top:444.15px;font-size:14.00px;line-height:14.00px;font-weight:700;color:#343c48;white-space:nowrap;-webkit-text-stroke:0.2px currentColor;left:1603.01px;transform:scaleX(0.9652);transform-origin:left;">Start:</div>
<div class="t" id="t85" style="position:absolute;top:444.40px;font-size:13.70px;line-height:13.70px;font-weight:400;color:#343c48;white-space:nowrap;-webkit-text-stroke:0.25px currentColor;left:1641.15px;transform:scaleX(1.0200);transform-origin:left;">Mar 3, 2025 9:17 PM</div>
<div class="t" id="t86" style="position:absolute;top:472.15px;font-size:14.00px;line-height:14.00px;font-weight:700;color:#343c48;white-space:nowrap;-webkit-text-stroke:0.2px currentColor;left:1602.54px;transform:scaleX(0.9158);transform-origin:left;">End:</div>
<div class="t" id="t87" style="position:absolute;top:472.40px;font-size:13.70px;line-height:13.70px;font-weight:400;color:#343c48;white-space:nowrap;-webkit-text-stroke:0.25px currentColor;left:1633.95px;transform:scaleX(1.0200);transform-origin:left;">Mar 3, 2025 9:19 PM</div>
<div class="t" id="t88" style="position:absolute;top:500.15px;font-size:14.00px;line-height:14.00px;font-weight:700;color:#343c48;white-space:nowrap;-webkit-text-stroke:0.2px currentColor;left:1602.52px;transform:scaleX(0.9443);transform-origin:left;">Duration:</div>
<div class="t" id="t89" style="position:absolute;top:500.40px;font-size:13.70px;line-height:13.70px;font-weight:400;color:#343c48;white-space:nowrap;-webkit-text-stroke:0.25px currentColor;left:1664.24px;transform:scaleX(1.0200);transform-origin:left;">1m 35s</div>
<div class="t" id="t90" style="position:absolute;top:528.15px;font-size:14.00px;line-height:14.00px;font-weight:700;color:#343c48;white-space:nowrap;-webkit-text-stroke:0.2px currentColor;left:1602.52px;transform:scaleX(0.9356);transform-origin:left;">Routing Requested:</div>
<div class="t" id="t91" style="position:absolute;top:528.40px;font-size:13.70px;line-height:13.70px;font-weight:400;color:#343c48;white-space:nowrap;-webkit-text-stroke:0.25px currentColor;left:1729.85px;transform:scaleX(1.0200);transform-origin:left;">None</div>
<div class="t" id="t92" style="position:absolute;top:556.15px;font-size:14.00px;line-height:14.00px;font-weight:700;color:#343c48;white-space:nowrap;-webkit-text-stroke:0.2px currentColor;left:1602.53px;transform:scaleX(0.9317);transform-origin:left;">Routing Used:</div>
<div class="t" id="t93" style="position:absolute;top:556.40px;font-size:13.70px;line-height:13.70px;font-weight:400;color:#343c48;white-space:nowrap;-webkit-text-stroke:0.25px currentColor;left:1694.55px;transform:scaleX(1.0200);transform-origin:left;">None</div>
<div class="t" id="t94" style="position:absolute;top:600.15px;font-size:14.00px;line-height:14.00px;font-weight:400;color:#343c48;white-space:nowrap;-webkit-text-stroke:0.25px currentColor;left:1571.17px;">3</div>
<div class="t" id="t95" style="position:absolute;top:599.90px;font-size:14.30px;line-height:14.30px;font-weight:400;color:#2a62c6;white-space:nowrap;-webkit-text-stroke:0.25px currentColor;left:1603.34px;transform:scaleX(1.0062);transform-origin:left;">Voice</div>
<div class="t" id="t96" style="position:absolute;top:628.15px;font-size:14.00px;line-height:14.00px;font-weight:700;color:#343c48;white-space:nowrap;-webkit-text-stroke:0.2px currentColor;left:1603.01px;transform:scaleX(0.9652);transform-origin:left;">Start:</div>
<div class="t" id="t97" style="position:absolute;top:628.40px;font-size:13.70px;line-height:13.70px;font-weight:400;color:#343c48;white-space:nowrap;-webkit-text-stroke:0.25px currentColor;left:1641.15px;transform:scaleX(1.0200);transform-origin:left;">Mar 3, 2025 9:21 PM</div>
<div class="t" id="t98" style="position:absolute;top:656.15px;font-size:14.00px;line-height:14.00px;font-weight:700;color:#343c48;white-space:nowrap;-webkit-text-stroke:0.2px currentColor;left:1602.54px;transform:scaleX(0.9158);transform-origin:left;">End:</div>
<div class="t" id="t99" style="position:absolute;top:656.40px;font-size:13.70px;line-height:13.70px;font-weight:400;color:#343c48;white-space:nowrap;-webkit-text-stroke:0.25px currentColor;left:1633.95px;transform:scaleX(1.0200);transform-origin:left;">Mar 3, 2025 9:22 PM</div>
<div class="t" id="t100" style="position:absolute;top:684.15px;font-size:14.00px;line-height:14.00px;font-weight:700;color:#343c48;white-space:nowrap;-webkit-text-stroke:0.2px currentColor;left:1602.52px;transform:scaleX(0.9443);transform-origin:left;">Duration:</div>
<div class="t" id="t101" style="position:absolute;top:684.40px;font-size:13.70px;line-height:13.70px;font-weight:400;color:#343c48;white-space:nowrap;-webkit-text-stroke:0.25px currentColor;left:1664.74px;transform:scaleX(1.0200);transform-origin:left;">51s</div>
<div class="t" id="t102" style="position:absolute;top:712.15px;font-size:14.00px;line-height:14.00px;font-weight:700;color:#343c48;white-space:nowrap;-webkit-text-stroke:0.2px currentColor;left:1602.52px;transform:scaleX(0.9356);transform-origin:left;">Routing Requested:</div>
<div class="t" id="t103" style="position:absolute;top:712.40px;font-size:13.70px;line-height:13.70px;font-weight:400;color:#343c48;white-space:nowrap;-webkit-text-stroke:0.25px currentColor;left:1730.37px;transform:scaleX(1.0200);transform-origin:left;">Standard</div>
<div class="t" id="t104" style="position:absolute;top:740.15px;font-size:14.00px;line-height:14.00px;font-weight:700;color:#343c48;white-space:nowrap;-webkit-text-stroke:0.2px currentColor;left:1602.53px;transform:scaleX(0.9317);transform-origin:left;">Routing Used:</div>
<div class="t" id="t105" style="position:absolute;top:740.40px;font-size:13.70px;line-height:13.70px;font-weight:400;color:#343c48;white-space:nowrap;-webkit-text-stroke:0.25px currentColor;left:1695.07px;transform:scaleX(1.0200);transform-origin:left;">Standard</div>
<div class="t" id="t106" style="position:absolute;top:784.15px;font-size:14.00px;line-height:14.00px;font-weight:400;color:#343c48;white-space:nowrap;-webkit-text-stroke:0.25px currentColor;left:1571.38px;">4</div>
<div class="t" id="t107" style="position:absolute;top:783.90px;font-size:14.30px;line-height:14.30px;font-weight:400;color:#2a62c6;white-space:nowrap;-webkit-text-stroke:0.25px currentColor;left:1602.21px;transform:scaleX(1.0141);transform-origin:left;">Message</div>
<div class="t" id="t108" style="position:absolute;top:812.15px;font-size:14.00px;line-height:14.00px;font-weight:700;color:#343c48;white-space:nowrap;-webkit-text-stroke:0.2px currentColor;left:1603.01px;transform:scaleX(0.9652);transform-origin:left;">Start:</div>
<div class="t" id="t109" style="position:absolute;top:812.40px;font-size:13.70px;line-height:13.70px;font-weight:400;color:#343c48;white-space:nowrap;-webkit-text-stroke:0.25px currentColor;left:1641.15px;transform:scaleX(1.0200);transform-origin:left;">Mar 3, 2025 9:21 PM</div>
<div class="t" id="t110" style="position:absolute;top:840.15px;font-size:14.00px;line-height:14.00px;font-weight:700;color:#343c48;white-space:nowrap;-webkit-text-stroke:0.2px currentColor;left:1602.54px;transform:scaleX(0.9158);transform-origin:left;">End:</div>
<div class="t" id="t111" style="position:absolute;top:840.40px;font-size:13.70px;line-height:13.70px;font-weight:400;color:#343c48;white-space:nowrap;-webkit-text-stroke:0.25px currentColor;left:1633.95px;transform:scaleX(1.0200);transform-origin:left;">Mar 3, 2025 9:22 PM</div>
<div class="t" id="t112" style="position:absolute;top:868.15px;font-size:14.00px;line-height:14.00px;font-weight:700;color:#343c48;white-space:nowrap;-webkit-text-stroke:0.2px currentColor;left:1602.52px;transform:scaleX(0.9443);transform-origin:left;">Duration:</div>
<div class="t" id="t113" style="position:absolute;top:868.40px;font-size:13.70px;line-height:13.70px;font-weight:400;color:#343c48;white-space:nowrap;-webkit-text-stroke:0.25px currentColor;left:1664.60px;transform:scaleX(1.0200);transform-origin:left;">20s</div>
<div class="t" id="t114" style="position:absolute;top:896.15px;font-size:14.00px;line-height:14.00px;font-weight:700;color:#343c48;white-space:nowrap;-webkit-text-stroke:0.2px currentColor;left:1602.52px;transform:scaleX(0.9356);transform-origin:left;">Routing Requested:</div>
<div class="t" id="t115" style="position:absolute;top:896.40px;font-size:13.70px;line-height:13.70px;font-weight:400;color:#343c48;white-space:nowrap;-webkit-text-stroke:0.25px currentColor;left:1729.85px;transform:scaleX(1.0200);transform-origin:left;">None</div>
<div class="t" id="t116" style="position:absolute;top:924.15px;font-size:14.00px;line-height:14.00px;font-weight:700;color:#343c48;white-space:nowrap;-webkit-text-stroke:0.2px currentColor;left:1602.53px;transform:scaleX(0.9317);transform-origin:left;">Routing Used:</div>
<div class="t" id="t117" style="position:absolute;top:924.40px;font-size:13.70px;line-height:13.70px;font-weight:400;color:#343c48;white-space:nowrap;-webkit-text-stroke:0.25px currentColor;left:1694.55px;transform:scaleX(1.0200);transform-origin:left;">None</div>
<div class="t" id="t118" style="position:absolute;top:968.15px;font-size:14.00px;line-height:14.00px;font-weight:400;color:#343c48;white-space:nowrap;-webkit-text-stroke:0.25px currentColor;left:1571.14px;">5</div>
<div class="t" id="t119" style="position:absolute;top:967.90px;font-size:14.30px;line-height:14.30px;font-weight:400;color:#2a62c6;white-space:nowrap;-webkit-text-stroke:0.25px currentColor;left:1603.34px;transform:scaleX(1.0062);transform-origin:left;">Voice</div>
<div class="t" id="t120" style="position:absolute;top:996.15px;font-size:14.00px;line-height:14.00px;font-weight:700;color:#343c48;white-space:nowrap;-webkit-text-stroke:0.2px currentColor;left:1603.01px;transform:scaleX(0.9652);transform-origin:left;">Start:</div>
<div class="t" id="t121" style="position:absolute;top:996.40px;font-size:13.70px;line-height:13.70px;font-weight:400;color:#343c48;white-space:nowrap;-webkit-text-stroke:0.25px currentColor;left:1641.15px;transform:scaleX(1.0200);transform-origin:left;">Mar 3, 2025 9:23 PM</div></body></html>
